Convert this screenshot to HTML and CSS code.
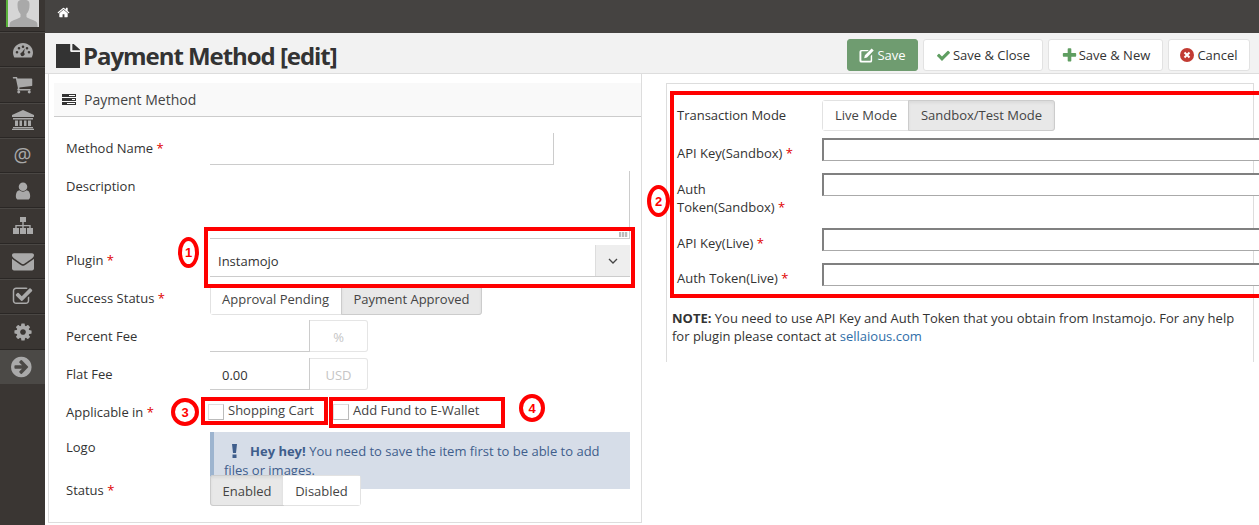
FILE: index.html
```html
<!DOCTYPE html>
<html lang="en">
<head>
  <meta charset="UTF-8" />
  <title>Payment Method [edit]</title>
  <link rel="stylesheet" href="styles.css">
</head>
<body>

  <!-- Sidebar -->
  <nav class="sidebar">
    <div class="avatar">
      <svg viewBox="0 0 31 27" width="31" height="27"><rect width="31" height="27" fill="#d6d6d6"/><path fill="#a9a9a9" d="M15.500 0c-4 0-6 0-6 5 0 4 1 7 3 9v3c-2 2-8 3-10 5-1 1-1 3-1 5h28c0-2 0-4-1-5-2-2-8-3-10-5v-3c2-2 3-5 3-9 0-5-2-5-6-5z"/></svg>
    </div>
    <a class="side-item" href="#"><svg viewBox="0 0 20 16" width="20" height="16"><path fill="#a9a9a9" fill-rule="evenodd" d="M10 1c5.500 0 10 4.300 10 9.600 0 1.800-.5 3.400-1.300 4.800H1.300C.5 14 0 12.400 0 10.600 0 5.300 4.500 1 10 1zM4 9a1.300 1.300 0 1 0 0 2.600A1.300 1.300 0 0 0 4 9zm2-4a1.300 1.300 0 1 0 0 2.600A1.300 1.300 0 0 0 6 5zm4-1.500a1.300 1.300 0 1 0 0 2.600 1.300 1.300 0 0 0 0-2.600zM14 5a1.300 1.300 0 1 0 0 2.600A1.300 1.300 0 0 0 14 5zm2 4a1.300 1.300 0 1 0 0 2.600A1.300 1.300 0 0 0 16 9zM11.800 6.500 9 10.200a2 2 0 1 0 2 .6z"/></svg></a>
    <a class="side-item" href="#"><svg viewBox="0 0 1792 1792" width="21" height="21"><path d="M704 1536q0 52-38 90t-90 38-90-38-38-90 38-90 90-38 90 38 38 90zm896 0q0 52-38 90t-90 38-90-38-38-90 38-90 90-38 90 38 38 90zm128-1088v512q0 24-16.5 42.5t-40.5 21.500l-1044 122q13 60 13 70 0 16-24 64h920q26 0 45 19t19 45-19 45-45 19h-1024q-26 0-45-19t-19-45q0-11 8-31.500t16-36 21.500-40 15.500-29.500l-177-823h-204q-26 0-45-19t-19-45 19-45 45-19h256q16 0 28.500 6.500t19.500 15.500 13 24.500 8 26 5.500 29.500 4.500 26h1201q26 0 45 19t19 45z"/></svg></a>
    <a class="side-item" href="#"><svg viewBox="0 0 22 20" width="22" height="20"><path fill="#a9a9a9" d="M11 0 0 5v2h22V5zM1 8h20v1.500H1zM3 10.500h3v5.500H3zM7.500 10.500h2.500v5.500H7.500zM12 10.500h2.500v5.500H12zM16 10.500h3v5.500h-3zM1 17h20v1.300H1zM0 18.700h22V20H0z"/></svg></a>
    <a class="side-item side-at" href="#">@</a>
    <a class="side-item" href="#"><svg viewBox="0 0 1792 1792" width="20" height="20"><path d="M1536 1399q0 109-62.500 187t-150.500 78h-854q-88 0-150.500-78t-62.500-187q0-85 8.500-160.500t31.500-152 58.500-131 94-89 134.500-34.500q131 128 313 128t313-128q76 0 134.500 34.500t94 89 58.500 131 31.500 152 8.500 160.500zm-256-887q0 159-112.500 271.500t-271.500 112.500-271.500-112.500-112.500-271.500 112.500-271.500 271.500-112.500 271.500 112.500 112.500 271.500z"/></svg></a>
    <a class="side-item" href="#"><svg viewBox="0 0 20 18" width="20" height="18"><path fill="#a9a9a9" d="M7 0h6v5H7zM9.300 5h1.400v3h7v3h-1.400V9.300h-5.600V11H9.300V9.300H3.700V11H2.300V8h7zM0 11h6v6H0zM7 11h6v6H7zM14 11h6v6h-6z"/></svg></a>
    <a class="side-item" href="#"><svg viewBox="0 0 1792 1792" width="22" height="22"><path d="M1792 710v794q0 66-47 113t-113 47h-1472q-66 0-113-47t-47-113v-794q44 49 101 87 362 246 497 345 57 42 92.500 65.500t94.500 48 110 24.500h2q51 0 110-24.500t94.500-48 92.500-65.500q170-123 498-345 57-39 100-87zm0-294q0 79-49 151t-122 123q-376 261-468 325-10 7-42.500 30.500t-54 38-52 32.500-57.500 27-50 9h-2q-23 0-50-9t-57.500-27-52-32.500-54-38-42.500-30.500q-91-64-262-182.500t-205-142.500q-62-42-117-115.500t-55-136.500q0-78 41.500-130t118.500-52h1472q65 0 112.500 47t47.500 113z"/></svg></a>
    <a class="side-item" href="#"><svg viewBox="0 0 1792 1792" width="21" height="21"><path d="M1472 930v318q0 119-84.500 203.500t-203.500 84.500h-832q-119 0-203.500-84.500t-84.500-203.500v-832q0-119 84.500-203.500t203.500-84.500h832q63 0 117 25 15 7 18 23 3 17-9 29l-49 49q-10 10-23 10-3 0-9-2-23-6-45-6h-832q-66 0-113 47t-47 113v832q0 66 47 113t113 47h832q66 0 113-47t47-113v-254q0-13 9-22l64-64q10-10 23-10 6 0 12 3 20 8 20 29zm231-489l-814 814q-24 24-57 24t-57-24l-430-430q-24-24-24-57t24-57l110-110q24-24 57-24t57 24l263 263 647-647q24-24 57-24t57 24l110 110q24 24 24 57t-24 57z"/></svg></a>
    <a class="side-item" href="#"><svg viewBox="0 0 1792 1792" width="20" height="20"><path d="M1152 896q0-106-75-181t-181-75-181 75-75 181 75 181 181 75 181-75 75-181zm512-109v222q0 12-8 23t-20 13l-185 28q-19 54-39 91 35 50 107 138 10 12 10 25t-9 23q-27 37-99 108t-94 71q-12 0-26-9l-138-108q-44 23-91 38-16 136-29 186-7 28-36 28h-222q-14 0-24.500-8.500t-11.500-21.500l-28-184q-49-16-90-37l-141 107q-10 9-25 9-14 0-25-11-126-114-165-168-7-10-7-23 0-12 8-23 15-21 51-66.500t54-70.500q-27-50-41-99l-183-27q-13-2-21-12.500t-8-23.500v-222q0-12 8-23t19-13l186-28q14-46 39-92-40-57-107-138-10-12-10-24 0-10 9-23 26-36 98.500-107.500t94.500-71.500q13 0 26 10l138 107q44-23 91-38 16-136 29-186 7-28 36-28h222q14 0 24.500 8.500t11.500 21.500l28 184q49 16 90 37l142-107q9-9 24-9 13 0 25 10 129 119 165 170 7 8 7 22 0 12-8 23-15 21-51 66.500t-54 70.500q26 50 41 98l183 28q13 2 21 12.500t8 23.500z"/></svg></a>
    <a class="side-item side-active" href="#"><svg viewBox="0 0 1792 1792" width="24" height="24"><path d="M1285 896q0-27-18-45l-91-91-362-362q-18-18-45-18t-45 18l-91 91q-18 18-18 45t18 45l189 189h-502q-26 0-45 19t-19 45v128q0 26 19 45t45 19h502l-189 189q-19 19-19 45t19 45l91 91q18 18 45 18t45-18l362-362 91-91q18-18 18-45zm251 0q0 209-103 385.500t-279.500 279.500-385.500 103-385.500-103-279.500-279.500-103-385.500 103-385.500 279.500-279.500 385.500-103 385.500 103 279.500 279.500 103 385.500z"/></svg></a>
  </nav>

  <div class="main">
    <div class="topbar">
      <svg class="home-icon" viewBox="0 0 1792 1792" width="13" height="13"><path d="M1472 992v480q0 26-19 45t-45 19h-384v-384h-256v384h-384q-26 0-45-19t-19-45v-480q0-1 .5-3t.5-3l575-474 575 474q1 2 1 6zm223-69l-62 74q-8 9-21 11h-3q-13 0-21-7l-692-577-692 577q-12 8-24 7-13-2-21-11l-62-74q-8-10-7-23.500t11-21.500l719-599q32-26 76-26t76 26l244 204v-195q0-14 9-23t23-9h192q14 0 23 9t9 23v408l219 182q10 8 11 21.500t-7 23.500z"/></svg>
    </div>

    <header class="page-head">
      <h1 class="page-title">
        <svg viewBox="0 0 1792 1792" width="24" height="24"><path fill="#333" transform="translate(-230 -130) scale(1.260 1.150)" d="M1152 512v-472q22 14 36 28l408 408q14 14 28 36h-472zm-128 32q0 40 28 68t68 28h544v1056q0 40-28 68t-68 28h-1344q-40 0-68-28t-28-68v-1600q0-40 28-68t68-28h800v544z"/></svg>
        Payment Method [edit]
      </h1>
      <div class="toolbar">
        <button class="btn btn-save"><svg viewBox="0 0 16 16" width="15" height="15"><path fill="#fff" d="M2.500 2h8L9 3.500H3A.5.5 0 0 0 2.500 4v9a.5.5 0 0 0 .5.5h9a.5.5 0 0 0 .5-.5V8.500L14 7v6.500a2 2 0 0 1-2 2H2.500a2 2 0 0 1-2-2V4a2 2 0 0 1 2-2zM13.500.5 15.700 2.700 8.500 10 5.500 11 6.300 7.700z"/></svg>Save</button>
        <button class="btn btn-close"><svg viewBox="0 0 1792 1792" width="15" height="15"><path fill="#5f9e61" d="M1671 566q0 40-28 68l-724 724-136 136q-28 28-68 28t-68-28l-136-136-362-362q-28-28-28-68t28-68l136-136q28-28 68-28t68 28l294 295 656-657q28-28 68-28t68 28l136 136q28 28 28 68z"/></svg>Save &amp; Close</button>
        <button class="btn btn-new"><svg viewBox="0 0 1792 1792" width="17" height="17"><path fill="#5f9e61" d="M1600 736v192q0 40-28 68t-68 28h-416v416q0 40-28 68t-68 28h-192q-40 0-68-28t-28-68v-416h-416q-40 0-68-28t-28-68v-192q0-40 28-68t68-28h416v-416q0-40 28-68t68-28h192q40 0 68 28t28 68v416h416q40 0 68 28t28 68z"/></svg>Save &amp; New</button>
        <button class="btn btn-cancel"><svg viewBox="0 0 14 14" width="14" height="14"><circle cx="7" cy="7" r="7" fill="#c23b33"/><path d="M4.500 4.500l5 5M9.500 4.500l-5 5" stroke="#fff" stroke-width="2"/></svg>Cancel</button>
      </div>
    </header>

    <div class="content">
      <!-- Left form -->
      <section class="panel-left">
        <div class="panel-head">
          <svg viewBox="0 0 14 11" width="14" height="11"><path fill="#333" d="M0 0h14v3H0zM0 4h14v3H0zM0 8h14v3H0z"/><path fill="#fff" d="M7 1h6v1H7zM10 5h3v1h-3zM5 9h8v1H5z"/></svg>
          Payment Method
        </div>

        <div class="row row-name">
          <label>Method Name <span class="req">*</span></label>
          <div class="plain-input field-name"></div>
        </div>
        <div class="row row-desc">
          <label>Description</label>
          <div class="plain-input field-desc"><span class="grip"></span></div>
        </div>
        <div class="row row-plugin">
          <label>Plugin <span class="req">*</span></label>
          <div class="select-box">
            <span>Instamojo</span>
            <span class="select-arrow"><svg viewBox="0 0 10 6" width="10" height="6"><path d="M1 1l4 4 4-4" fill="none" stroke="#444" stroke-width="1.300"/></svg></span>
          </div>
        </div>
        <div class="row row-success">
          <label>Success Status <span class="req">*</span></label>
          <div class="seg">
            <span class="seg-btn seg-approval">Approval Pending</span>
            <span class="seg-btn seg-on seg-approved">Payment Approved</span>
          </div>
        </div>
        <div class="row row-fee">
          <label>Percent Fee</label>
          <div class="fee-input"></div>
          <span class="addon addon-pct">%</span>
        </div>
        <div class="row row-fee">
          <label>Flat Fee</label>
          <div class="fee-input">0.00</div>
          <span class="addon">USD</span>
        </div>
        <div class="row row-apply">
          <label>Applicable in <span class="req">*</span></label>
          <div class="check-item check-cart"><span class="check"></span>Shopping Cart</div>
          <div class="check-item"><span class="check"></span>Add Fund to E-Wallet</div>
        </div>
        <div class="row row-logo">
          <label>Logo</label>
          <div class="alert"><svg class="alert-mark" viewBox="0 0 5 14" width="5" height="14"><path fill="#3f5e8c" d="M0 0h5L4 9H1zM.5 10.500h4V14h-4z"/></svg><b>Hey hey!</b> You need to save the item first to be able to add files or images.</div>
        </div>
        <div class="row row-status">
          <label>Status <span class="req">*</span></label>
          <div class="seg">
            <span class="seg-btn seg-on seg-enabled">Enabled</span>
            <span class="seg-btn seg-disabled">Disabled</span>
          </div>
        </div>
      </section>

      <!-- Right form -->
      <section class="panel-right">
        <div class="r-row r-mode">
          <label>Transaction Mode</label>
          <div class="seg">
            <span class="seg-btn seg-live">Live Mode</span>
            <span class="seg-btn seg-on seg-test">Sandbox/Test Mode</span>
          </div>
        </div>
        <div class="r-row r-key"><label>API Key(Sandbox) <span class="req">*</span></label><input type="text"></div>
        <div class="r-row r-token"><label>Auth<br>Token(Sandbox) <span class="req">*</span></label><input type="text"></div>
        <div class="r-row r-key"><label>API Key(Live) <span class="req">*</span></label><input type="text"></div>
        <div class="r-row r-key"><label>Auth Token(Live) <span class="req">*</span></label><input type="text"></div>
        <p class="note"><b>NOTE:</b> You need to use API Key and Auth Token that you obtain from Instamojo. For any help for plugin please contact at <a href="#">sellaious.com</a></p>
      </section>
    </div>

    <!-- Red annotations drawn over the form -->
    <div class="mark-box box-1"></div>
    <div class="mark-box box-2"></div>
    <div class="mark-box box-3"></div>
    <div class="mark-box box-4"></div>
    <span class="mark-num num-1">1</span>
    <span class="mark-num num-2">2</span>
    <span class="mark-num num-3">3</span>
    <span class="mark-num num-4">4</span>
  </div>

</body>
</html>
```

FILE: styles.css
```css
* {
  box-sizing: border-box;
}

html, body {
  height: 525px;
  overflow: hidden;
}

body {
  margin: 0;
  display: flex;
  background-color: #3a3633;
  font-family: "Open Sans", sans-serif;
  font-size: 13px;
  color: #333;
}

label {
  font-weight: 400;
}

.req {
  color: #e00000;
}

/* sidebar */
.sidebar {
  width: 45px;
  flex: none;
  background-color: #3a3633;
}

.avatar {
  height: 32px;
  padding-left: 6px;
  border-bottom: 1px solid #2a2725;
  display: flex;
  align-items: flex-start;
}

.avatar svg {
  border-left: 2px solid #5bb33b;
  width: 33px;
  display: block;
}

.side-item {
  height: 35.3px;
  display: flex;
  align-items: center;
  justify-content: center;
  border-bottom: 1px solid #2a2725;
  border-top: 1px solid #4a4744;
  text-decoration: none;
}

.side-item svg {
  fill: #a9a9a9;
}

.side-at {
  color: #a9a9a9;
  font-size: 20px;
  padding-bottom: 3px;
}

.side-active {
  background-color: #4b4946;
  border-color: #4b4946;
  height: 34px;
}

/* top */
.main {
  flex: 1;
  min-width: 0;
  position: relative;
  background-color: #fff;
}

.topbar {
  height: 33px;
  background-color: #454341;
  padding: 6px 0 0 12px;
}

.home-icon {
  display: block;
  fill: #fff;
}

.page-head {
  height: 41px;
  background-color: #f2f2f2;
  border-bottom: 1px solid #ddd;
  display: flex;
  justify-content: space-between;
  padding: 6px 9px 0 11px;
}

.page-title {
  margin: 0;
  font-size: 24px;
  line-height: 34px;
  font-weight: 700;
  letter-spacing: -1.05px;
  color: #333;
  display: flex;
  align-items: center;
  gap: 3px;
  white-space: nowrap;
}

.toolbar {
  display: flex;
  gap: 5px;
}

.btn {
  height: 32px;
  background-color: #fff;
  border: 1px solid #e2e2e2;
  border-radius: 3px;
  font-family: inherit;
  font-size: 13px;
  color: #333;
  display: flex;
  align-items: center;
  justify-content: center;
  gap: 2px;
  padding: 0;
}

.btn-save {
  width: 71px;
  background-color: #6f9c70;
  border-color: #6f9c70;
  color: #fff;
  gap: 3px;
}

.btn-close {
  width: 120px;
}

.btn-new {
  width: 115px;
  gap: 1px;
}

.btn-cancel {
  width: 82px;
  gap: 3px;
}

.content {
  display: flex;
  align-items: flex-start;
}

/* left panel */
.panel-left {
  width: 594px;
  height: 449px;
  margin-left: 3px;
  padding: 9px 0 0 5px;
  border-left: 1px solid #ddd;
  border-right: 1px solid #ddd;
  border-bottom: 1px solid #ddd;
  flex: none;
}

.panel-head {
  height: 34px;
  background-color: #f9f9f9;
  border-bottom: 1px solid #ccc;
  display: flex;
  align-items: center;
  gap: 8px;
  padding-left: 8px;
  font-size: 14px;
  color: #444;
  margin-bottom: 16px;
}

.row {
  display: flex;
  padding-left: 12px;
}

.row > label {
  width: 144px;
  flex: none;
}

.row-name {
  height: 32px;
  line-height: 30px;
  margin-bottom: 6px;
}

.plain-input {
  border-right: 1px solid #ccc;
  border-bottom: 1px solid #ccc;
}

.field-name {
  width: 344px;
  height: 32px;
}

.row-desc {
  height: 68px;
  line-height: 30px;
}

.field-desc {
  width: 420px;
  position: relative;
}

.grip {
  position: absolute;
  right: 1px;
  bottom: 1px;
  width: 9px;
  height: 5px;
  background: repeating-linear-gradient(90deg, #bbb 0 2px, #eee 2px 3px);
}

.row-plugin {
  height: 38px;
  line-height: 44px;
  margin-bottom: 7px;
}

.row-plugin > label {
  line-height: 42px;
}

.select-box {
  width: 420px;
  border-bottom: 1px solid #ccc;
  display: flex;
  justify-content: space-between;
  padding-left: 8px;
}

.select-arrow {
  width: 35px;
  height: 31px;
  margin-top: 6px;
  background-color: #eee;
  border-left: 1px solid #ddd;
  display: flex;
  align-items: center;
  justify-content: center;
}

.row-success {
  height: 31px;
  line-height: 28px;
  margin-bottom: 5px;
}

.seg {
  display: flex;
  height: 31px;
  border: 1px solid #e2e2e2;
  border-radius: 3px;
  line-height: 29px;
}

.seg-btn {
  display: block;
  text-align: center;
  background-color: #fff;
  color: #444;
}

.seg-on {
  background-color: #e8e8e8;
  border: 1px solid #ccc;
  margin: -1px;
  border-radius: 0 3px 3px 0;
  box-shadow: inset 0 2px 3px rgba(0, 0, 0, 0.06);
}

.seg-approval {
  width: 131px;
  padding-right: 2px;
}

.seg-approved {
  width: 141px;
}

.seg-enabled {
  width: 74px;
  border-radius: 3px 0 0 3px;
}

.seg-disabled {
  width: 77px;
}

.seg-live {
  width: 86px;
}

.seg-test {
  width: 147px;
}

.row-fee {
  height: 32px;
  line-height: 32px;
  margin-bottom: 6px;
}

.fee-input {
  width: 100px;
  padding-left: 12px;
  border-bottom: 1px solid #ccc;
  border-right: 1px solid #ccc;
  line-height: 34px;
}

.addon {
  width: 58px;
  border: 1px solid #e5e5e5;
  border-left: none;
  border-radius: 0 3px 3px 0;
  color: #c5c5c5;
  text-align: center;
}

.row-apply {
  height: 32px;
  line-height: 32px;
  margin-bottom: 4px;
}

.row-apply > label {
  width: 142px;
}

.check-item {
  display: flex;
  align-items: flex-start;
  color: #444;
  height: 26px;
  margin-top: 1px;
  line-height: 26px;
}

.check-cart {
  width: 125px;
}

.check {
  width: 16px;
  height: 16px;
  margin: 7px 4px 0 0;
  background-color: #fff;
  border: 1px solid #ddd;
  border-right-color: #bbb;
  border-bottom-color: #bbb;
}

.row-logo {
  height: 57px;
  line-height: 30px;
  margin-bottom: -14px;
}

.alert {
  width: 420px;
  background-color: #d6dde8;
  border-left: 4px solid #9db4cf;
  padding: 10px 12px 0 10px;
  line-height: 19px;
  color: #3f5e8c;
  overflow: hidden;
}

.alert b {
  font-weight: 700;
}

.alert-mark {
  margin: 0 13px 0 8px;
  vertical-align: -2px;
}

.row-status {
  height: 32px;
  line-height: 30px;
  position: relative;
}

.row-status .seg {
  line-height: 31px;
}

/* right panel */
.panel-right {
  width: 588px;
  height: 279px;
  margin: 9px 0 0 24px;
  padding: 16px 0 0 10px;
  border: 1px solid #ddd;
  border-bottom: none;
  flex: none;
}

.r-row {
  display: flex;
  line-height: 18px;
}

.r-row label {
  width: 145px;
  flex: none;
  color: #333;
}

.r-row input {
  width: 460px;
  flex: none;
  height: 23px;
  border: 1px solid #aaa;
  border-top: 2px solid #808080;
  border-left: 2px solid #808080;
  background-color: #fff;
}

.r-mode {
  height: 38px;
}

.r-mode label {
  padding-top: 6px;
}

.r-key {
  height: 35px;
}

.r-key label {
  padding-top: 6px;
}

.r-token {
  height: 55px;
}

.r-token label {
  padding-top: 7px;
}

.note {
  margin: 11px 0 0 -5px;
  line-height: 18px;
  width: 575px;
}

.note a {
  color: #2f6ea8;
  text-decoration: none;
}

/* red annotations */
.mark-box {
  position: absolute;
  border: 4px solid #f00;
}

.box-1 {
  left: 159px;
  top: 227px;
  width: 431px;
  height: 61px;
}

.box-2 {
  left: 625px;
  top: 91px;
  width: 640px;
  height: 207px;
}

.box-3 {
  left: 156px;
  top: 397px;
  width: 127px;
  height: 28px;
}

.box-4 {
  left: 284px;
  top: 397px;
  width: 176px;
  height: 31px;
}

.mark-num {
  position: absolute;
  display: flex;
  align-items: center;
  justify-content: center;
  background-color: #fff;
  border: 4px solid #f00;
  border-radius: 50%;
  color: #f00;
  font-family: "Liberation Sans", sans-serif;
  font-weight: 700;
  font-size: 13px;
}

.num-1 {
  left: 133px;
  top: 237px;
  width: 21px;
  height: 31px;
}

.num-2 {
  left: 602px;
  top: 185px;
  width: 23px;
  height: 32px;
}

.num-3 {
  left: 126px;
  top: 398px;
  width: 28px;
  height: 28px;
}

.num-4 {
  left: 474px;
  top: 394px;
  width: 26px;
  height: 28px;
}
```
